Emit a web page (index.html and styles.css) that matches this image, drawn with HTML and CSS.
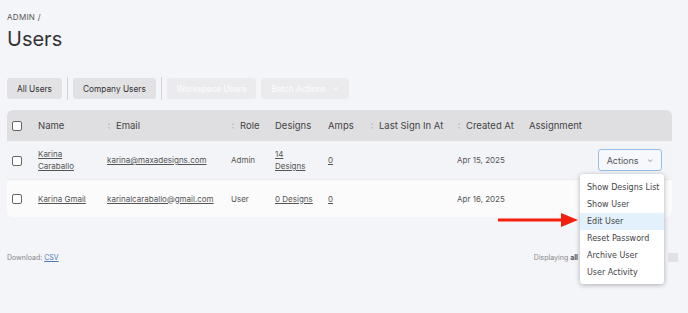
FILE: index.html
```html
<!DOCTYPE html>
<html lang="en">
<head>
    <title>Users</title>
    <link rel="stylesheet" href="styles.css">
</head>
<body>
    <div class="page">
        <div class="crumb">Admin /</div>
        <h1>Users</h1>

        <div class="toolbar">
            <button class="btn">All Users</button>
            <span class="sep"></span>
            <button class="btn">Company Users</button>
            <span class="sep"></span>
            <button class="btn faded">Workspace Users</button>
            <button class="btn faded">Batch Actions <span class="chev">&#8964;</span></button>
        </div>

        <div class="table-wrap">
            <table class="users">
                <colgroup>
                    <col style="width:31px">
                    <col style="width:69px">
                    <col style="width:124px">
                    <col style="width:44px">
                    <col style="width:53px">
                    <col style="width:42px">
                    <col style="width:87px">
                    <col style="width:72px">
                    <col style="width:61px">
                    <col>
                </colgroup>
                <thead>
                    <tr>
                        <th><span class="check"></span></th>
                        <th>Name</th>
                        <th><span class="sort"></span>Email</th>
                        <th><span class="sort"></span>Role</th>
                        <th>Designs</th>
                        <th>Amps</th>
                        <th><span class="sort"></span>Last Sign In At</th>
                        <th><span class="sort"></span>Created At</th>
                        <th>Assignment</th>
                        <th></th>
                    </tr>
                </thead>
                <tbody>
                    <tr class="row-a">
                        <td><span class="check"></span></td>
                        <td><a href="#">Karina<br>Caraballo</a></td>
                        <td><a href="#">karina@maxadesigns.com</a></td>
                        <td>Admin</td>
                        <td><a href="#">14<br>Designs</a></td>
                        <td><a href="#">0</a></td>
                        <td></td>
                        <td>Apr 15, 2025</td>
                        <td></td>
                        <td class="act"><button class="actions">Actions <span class="chev">&#8964;</span></button></td>
                    </tr>
                    <tr class="row-b">
                        <td><span class="check"></span></td>
                        <td><a href="#">Karina Gmail</a></td>
                        <td><a href="#">karinalcaraballo@gmail.com</a></td>
                        <td>User</td>
                        <td><a href="#">0 Designs</a></td>
                        <td><a href="#">0</a></td>
                        <td></td>
                        <td>Apr 16, 2025</td>
                        <td></td>
                        <td></td>
                    </tr>
                </tbody>
            </table>
        </div>

        <div class="footer">
            <div class="download">Download: <a href="#">CSV</a></div>
            <div class="paging">Displaying <b>all</b></div>
            <span class="pg"></span>
        </div>

        <ul class="menu">
            <li>Show Designs List</li>
            <li>Show User</li>
            <li class="hover">Edit User</li>
            <li>Reset Password</li>
            <li>Archive User</li>
            <li>User Activity</li>
        </ul>

        <svg class="arrow" width="82" height="16" viewBox="0 0 82 16">
            <rect x="0" y="6.5" width="66" height="3" fill="#f2200c"/>
            <polygon points="63,1 80,8 63,15" fill="#f2200c"/>
        </svg>
    </div>
</body>
</html>
```

FILE: styles.css
```css
body {
    margin: 0;
    background: #f4f5f9;
    font-family: Inter, "Open Sans", sans-serif;
    color: #444;
}

.page {
    position: relative;
    padding: 12px 16px 30px 7px;
    height: 271px;
}

.crumb {
    font-size: 8px;
    text-transform: uppercase;
    letter-spacing: 0.3px;
    color: #555;
    line-height: 10px;
}

h1 {
    margin: 5px 0 0;
    font-size: 20px;
    font-weight: 400;
    line-height: 24px;
    color: #333;
}

.toolbar {
    display: flex;
    align-items: center;
    gap: 5px;
    margin-top: 26px;
}

.btn {
    height: 21px;
    padding: 0 10px;
    border: 0;
    border-radius: 3px;
    background: #e2e2e5;
    color: #333;
    font-family: inherit;
    font-size: 8.3px;
}

.btn.faded {
    background: #ebebee;
    color: #fbfbfc;
}

.sep {
    width: 1px;
    height: 23px;
    background: #d4d4d8;
}

.chev {
    display: inline-block;
    font-size: 9px;
    margin-left: 4px;
    transform: translateY(-2px);
}

.table-wrap {
    margin-top: 10px;
    border-radius: 6px;
    overflow: hidden;
}

.users {
    width: 665px;
    border-collapse: collapse;
    table-layout: fixed;
}

.users th {
    height: 31px;
    padding: 0;
    background: #dfdfe2;
    font-size: 9.5px;
    font-weight: 400;
    color: #444;
    text-align: left;
    white-space: nowrap;
}

.users td {
    padding: 0;
    font-size: 8px;
    color: #555;
    line-height: 12px;
    white-space: nowrap;
}

.users th:first-child,
.users td:first-child {
    padding-left: 5px;
}

.row-a td {
    height: 38px;
    background: #f3f4f8;
    border-bottom: 1px solid #ececf0;
}

.row-b td {
    height: 37px;
    background: #fbfbfc;
}

.users a {
    color: #555;
}

.check {
    display: inline-block;
    width: 8px;
    height: 8px;
    border: 1px solid #666;
    border-radius: 2px;
    background: #fff;
    vertical-align: middle;
}

.sort {
    display: inline-block;
    width: 3px;
    height: 6px;
    margin-right: 6px;
    vertical-align: middle;
    background:
        linear-gradient(to bottom right, transparent 50%, #c4c4c8 50%) left top / 3px 2px no-repeat,
        linear-gradient(to top right, transparent 50%, #c4c4c8 50%) left bottom / 3px 2px no-repeat;
}

.act {
    text-align: right;
    padding-right: 10px !important;
}

.actions {
    width: 64px;
    height: 22px;
    border: 1px solid #95bfe6;
    border-radius: 3px;
    background: #f6f8fc;
    color: #555;
    font-family: inherit;
    font-size: 9px;
}

.actions .chev {
    font-size: 8px;
    margin-left: 6px;
    color: #999;
}

.footer {
    display: flex;
    align-items: center;
    margin-top: 36px;
    font-size: 7px;
    color: #888;
}

.download {
    flex: 1;
}

.download a {
    color: #4d7cb2;
}

.paging {
    margin-right: 90px;
}

.paging b {
    color: #555;
}

.pg {
    width: 10px;
    height: 9px;
    margin-right: -6px;
    background: #e2e2e5;
}

.menu {
    position: absolute;
    left: 580px;
    top: 174px;
    width: 84px;
    margin: 0;
    padding: 5px 0 3px;
    list-style: none;
    background: #fff;
    border-radius: 3px;
    box-shadow: 0 1px 5px rgba(0, 0, 0, 0.3);
    font-family: "DejaVu Sans", sans-serif;
    font-size: 8px;
    color: #444;
}

.menu li {
    height: 17px;
    line-height: 17px;
    padding-left: 7px;
    white-space: nowrap;
}

.menu li.hover {
    background: #e2f1fb;
}

.arrow {
    position: absolute;
    left: 498px;
    top: 212px;
}
```
